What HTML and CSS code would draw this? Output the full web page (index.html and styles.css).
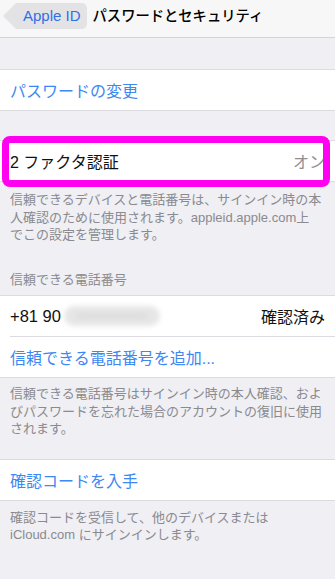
FILE: index.html
```html
<!DOCTYPE html>
<html lang="ja">
<head>
<meta charset="utf-8">
<title>パスワードとセキュリティ</title>
<link rel="stylesheet" href="styles.css">
</head>
<body>
<header class="nav">
  <a class="back">Apple ID</a>
  <h1 class="title">パスワードとセキュリティ</h1>
</header>

<section class="group g1">
  <div class="row link">パスワードの変更</div>
</section>

<section class="group g2">
  <div class="row">
    <span>2 ファクタ認証</span>
    <span class="value">オン</span>
  </div>
  <div class="highlight"></div>
</section>
<p class="footer f1">信頼できるデバイスと電話番号は、サインイン時の本<br>人確認のために使用されます。appleid.apple.com上<br>でこの設定を管理します。</p>

<h2 class="section-header">信頼できる電話番号</h2>
<section class="group g3">
  <div class="row">
    <span class="phone">+81 90<span class="blur"></span></span>
    <span class="status">確認済み</span>
  </div>
  <div class="sep"></div>
  <div class="row link">信頼できる電話番号を追加...</div>
</section>
<p class="footer f2">信頼できる電話番号はサインイン時の本人確認、およびパスワードを忘れた場合のアカウントの復旧に使用されます。</p>

<section class="group g4">
  <div class="row link">確認コードを入手</div>
</section>
<p class="footer f3">確認コードを受信して、他のデバイスまたは<br>iCloud.com にサインインします。</p>
</body>
</html>
```

FILE: styles.css
```css
* { box-sizing: border-box; }
html, body {
  margin: 0;
  padding: 0;
  background: #efeff4;
  font-family: "Liberation Sans", "Noto Sans CJK JP", sans-serif;
  width: 335px;
  overflow: hidden;
}
.nav {
  height: 38px;
  background: #f7f7f7;
  border-bottom: 1px solid #d4d4d8;
  display: flex;
  align-items: flex-start;
  padding-top: 3px;
}
.back {
  position: relative;
  margin-left: 16px;
  height: 26px;
  line-height: 26px;
  padding: 0 6px 0 7px;
  background: #e3e3e6;
  border-radius: 0 5px 5px 0;
  color: #2f6fe6;
  font-size: 15px;
}
.back::before {
  content: "";
  position: absolute;
  left: -13px;
  top: 0;
  width: 13px;
  height: 26px;
  background: #e3e3e6;
  clip-path: polygon(100% 0, 0 50%, 100% 100%);
}
.title {
  margin: 0 0 0 6px;
  font-size: 14.3px;
  font-weight: 500;
  line-height: 26px;
  color: #000;
}
.group {
  position: relative;
  background: #fff;
  border-top: 1px solid #dcdce0;
  border-bottom: 1px solid #dcdce0;
}
.g1 { margin-top: 31px; }
.g2 { margin-top: 29px; }
.g4 { margin-top: 21px; }
.row {
  height: 40px;
  display: flex;
  align-items: center;
  justify-content: space-between;
  padding: 0 10px;
  font-size: 16px;
  color: #111;
}
.row.link { color: #3d88f2; }
.value { color: #8e8e93; }
.sep {
  height: 1px;
  margin-left: 10px;
  background: #dcdce0;
}
.highlight {
  position: absolute;
  top: -5px;
  bottom: -6px;
  left: 2px;
  right: 5px;
  border: 7px solid #ff00f0;
  border-radius: 8px;
}
.phone {
  display: flex;
  align-items: center;
  font-size: 16.5px;
}
.blur {
  display: inline-block;
  width: 96px;
  height: 20px;
  margin-left: 3px;
  border-radius: 10px;
  background: linear-gradient(#d4d4d4, #d4d4d4) center/70px 4px no-repeat, #e2e2e2;
  filter: blur(2.5px);
  opacity: 0.85;
}
.status { color: #111; }
.footer {
  margin: 0;
  padding: 0 10px;
  font-size: 13px;
  line-height: 17.5px;
  color: #8a8a8f;
}
.f1 { padding-top: 9px; }
.f2 { padding-top: 7px; }
.f3 { padding-top: 8px; }
.section-header {
  margin: 27px 0 0;
  padding: 0 10px 7px;
  font-size: 13px;
  font-weight: normal;
  line-height: 17.5px;
  color: #8a8a8f;
}
```
